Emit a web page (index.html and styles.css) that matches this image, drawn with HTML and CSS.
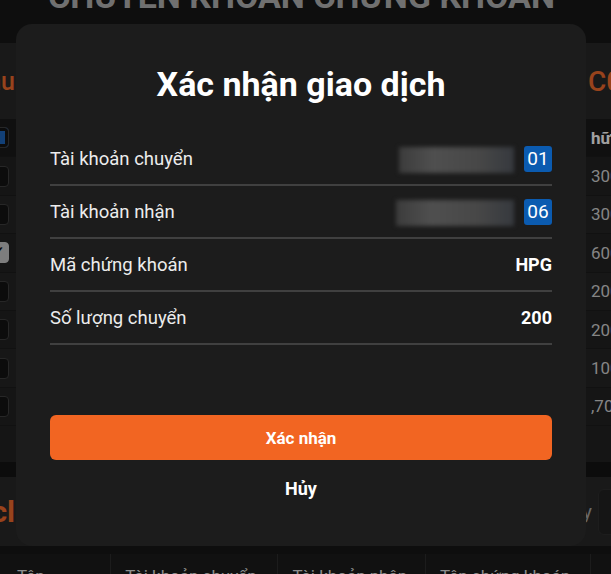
FILE: index.html
```html
<!DOCTYPE html>
<html lang="vi">
<head>
    <meta charset="UTF-8">
    <meta name="viewport" content="width=device-width, initial-scale=1.0">
    <title>Chuyển khoản chứng khoán</title>
    <link rel="stylesheet" href="styles.css">
</head>
<body>
    <div class="page">
        <header class="page-header">
            <h1>CHUYỂN KHOẢN CHỨNG KHOÁN</h1>
        </header>

        <!-- Danh mục chứng khoán -->
        <section class="panel">
            <div class="panel-head">
                <div class="head-left"><span class="panel-title">Danh mục menu</span></div>
                <span class="panel-title">C0</span>
            </div>
            <div class="stock-table">
                <div class="stock-row head">
                    <span class="check blue"></span>
                    <span class="cell-num">hữu</span>
                </div>
                <div class="stock-row"><span class="check"></span><span class="cell-num">300</span></div>
                <div class="stock-row alt"><span class="check"></span><span class="cell-num">300</span></div>
                <div class="stock-row"><span class="check checked">&#10003;</span><span class="cell-num">600</span></div>
                <div class="stock-row alt"><span class="check"></span><span class="cell-num">200</span></div>
                <div class="stock-row"><span class="check"></span><span class="cell-num">200</span></div>
                <div class="stock-row alt"><span class="check"></span><span class="cell-num">100</span></div>
                <div class="stock-row"><span class="check"></span><span class="cell-num">,700</span></div>
            </div>
            <div class="panel-foot"></div>
        </section>

        <!-- Lịch sử chuyển khoản -->
        <section class="panel history">
            <div class="panel-head">
                <div class="head-left"><span class="panel-title">Lịch sử cl</span></div>
                <div class="head-right">
                    <span class="muted">Ngày</span>
                    <span class="date-box"></span>
                </div>
            </div>
        </section>
        <div class="history-table">
            <span class="col">Tên</span>
            <span class="col">Tài khoản chuyển</span>
            <span class="col">Tài khoản nhận</span>
            <span class="col">Tên chứng khoán</span>
            <span class="col"></span>
        </div>
    </div>

    <div class="backdrop"></div>

    <div class="modal">
        <h2 class="modal-title">Xác nhận giao dịch</h2>

        <div class="info-row">
            <span class="info-label">Tài khoản chuyển</span>
            <span class="info-value">
                <span class="masked"></span>
                <span class="badge">01</span>
            </span>
        </div>
        <div class="info-row">
            <span class="info-label">Tài khoản nhận</span>
            <span class="info-value">
                <span class="masked wide"></span>
                <span class="badge">06</span>
            </span>
        </div>
        <div class="info-row">
            <span class="info-label">Mã chứng khoán</span>
            <span class="info-value strong">HPG</span>
        </div>
        <div class="info-row">
            <span class="info-label">Số lượng chuyển</span>
            <span class="info-value strong">200</span>
        </div>

        <button class="btn-confirm">Xác nhận</button>
        <button class="btn-cancel">Hủy</button>
    </div>
</body>
</html>
```

FILE: styles.css
```css
* {
    box-sizing: border-box;
}

body {
    margin: 0;
    height: 574px;
    overflow: hidden;
    background: #161616;
    font-family: Roboto, "Noto Sans", sans-serif;
}

.page-header {
    height: 43px;
    overflow: hidden;
}

.page-header h1 {
    margin: -22px 0 0 0;
    padding-right: 8px;
    font-size: 34px;
    line-height: 36px;
    font-weight: 700;
    color: #a6a6a6;
    text-align: center;
}

/* Panels behind the dialog */
.panel {
    background: #252525;
}

.panel-head {
    display: flex;
    justify-content: space-between;
    align-items: center;
    height: 76px;
    white-space: nowrap;
}

.head-left {
    width: 15px;
    display: flex;
    justify-content: flex-end;
}

.panel-title {
    font-size: 25px;
    font-weight: 500;
    color: #e0632a;
}

.panel-head > .panel-title {
    width: 23px;
    overflow: hidden;
    font-size: 28px;
}

.stock-table {
    background: #1d1d1d;
}

.stock-row {
    display: flex;
    justify-content: space-between;
    align-items: center;
    height: 38.4px;
    background: #1f1f1f;
    border-bottom: 1px solid #1a1a1a;
}

.stock-row.alt {
    background: #232323;
}

.stock-row.head {
    background: #181818;
}

.check {
    width: 21px;
    height: 21px;
    margin-left: -12px;
    border: 1px solid #3a3a3a;
    border-radius: 4px;
    background: #121212;
    color: #111;
    font-size: 15px;
    font-weight: 700;
    line-height: 19px;
    text-align: right;
    padding-right: 3px;
}

.check.blue {
    background: #1b5fb0;
    box-shadow: inset 0 0 0 3px #121212;
}

.check.checked {
    background: #b8b8b8;
    border-color: #b8b8b8;
}

.cell-num {
    width: 20px;
    overflow: hidden;
    font-size: 17px;
    color: #c4c4c4;
    white-space: nowrap;
}

.stock-row.head .cell-num {
    font-weight: 700;
    color: #eeeeee;
}

.panel-foot {
    height: 51px;
    background: #1f1f1f;
    border-bottom: 15px solid #121212;
}

.history .panel-head {
    height: 69px;
}

.history .panel-title {
    font-size: 30px;
    font-weight: 700;
}

.head-right {
    display: flex;
    align-items: center;
    gap: 6px;
}

.muted {
    width: 13px;
    overflow: hidden;
    direction: rtl;
    font-size: 20px;
    color: #9a9a9a;
}

.date-box {
    width: 26px;
    height: 46px;
    margin-right: -13px;
    border-radius: 6px;
    background: #1f1f1f;
    border: 1px solid #2c2c2c;
}

.history-table {
    display: flex;
    margin-top: 8px;
    height: 40px;
    background: #1a1a1a;
    white-space: nowrap;
}

.history-table .col {
    padding: 12px 0 0 14px;
    border-right: 1px solid #2a2a2a;
    font-size: 17px;
    color: #d0d0d0;
    overflow: hidden;
}

.history-table .col:nth-child(1) { width: 113px; padding-left: 17px; }
.history-table .col:nth-child(2) { width: 170px; }
.history-table .col:nth-child(3) { width: 150px; }
.history-table .col:nth-child(4) { width: 168px; }
.history-table .col:nth-child(5) { width: 20px; border-right: none; }

.backdrop {
    position: fixed;
    inset: 0;
    background: rgba(0, 0, 0, 0.32);
}

/* Dialog */
.modal {
    position: fixed;
    top: 24px;
    left: 16px;
    width: 570px;
    height: 522px;
    padding: 40px 34px 0;
    border-radius: 16px;
    background: #1c1c1c;
    display: flex;
    flex-direction: column;
}

.modal-title {
    margin: 0 0 29px;
    font-size: 34px;
    line-height: 40px;
    font-weight: 700;
    color: #ffffff;
    text-align: center;
}

.info-row {
    display: flex;
    justify-content: space-between;
    align-items: center;
    height: 53px;
    border-bottom: 2px solid #404040;
}

.info-label {
    font-size: 18.5px;
    color: #ececec;
}

.info-value {
    display: flex;
    align-items: center;
    gap: 10px;
    font-size: 18px;
    color: #ffffff;
}

.info-value.strong {
    font-weight: 700;
}

.masked {
    width: 115px;
    height: 26px;
    margin-top: 3px;
    background: linear-gradient(90deg, #3c3c3c, #4f4f4f 30%, #474747 70%, #36393e);
    filter: blur(2px);
}

.masked.wide {
    width: 118px;
    margin-top: 2px;
}

.badge {
    width: 28px;
    height: 26px;
    border-radius: 3px;
    background: #0b5bb0;
    color: #ffffff;
    font-size: 19px;
    line-height: 26px;
    text-align: center;
}

.btn-confirm {
    margin-top: 70px;
    height: 45px;
    border: none;
    border-radius: 6px;
    background: #f26522;
    color: #ffffff;
    font-family: inherit;
    font-size: 17px;
    font-weight: 700;
}

.btn-cancel {
    margin-top: 8px;
    height: 40px;
    border: none;
    background: none;
    color: #ffffff;
    font-family: inherit;
    font-size: 18px;
    font-weight: 700;
}
```
